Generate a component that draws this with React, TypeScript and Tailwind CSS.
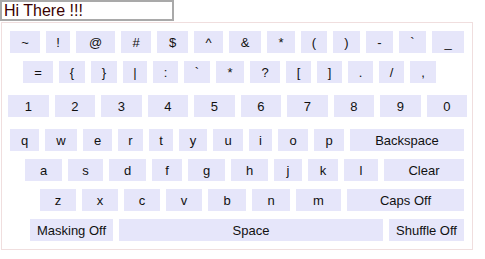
import React from "react"

type Key = { label: string; w: string }

// widths measured from the reference, gap between keys is 6px
const symbolsTop: Key[] = [
  { label: "~", w: "w-[30px]" },
  { label: "!", w: "w-[24px]" },
  { label: "@", w: "w-[39px]" },
  { label: "#", w: "w-[30px]" },
  { label: "$", w: "w-[31px]" },
  { label: "^", w: "w-[29px]" },
  { label: "&", w: "w-[32px]" },
  { label: "*", w: "w-[28px]" },
  { label: "(", w: "w-[26px]" },
  { label: ")", w: "w-[27px]" },
  { label: "-", w: "w-[27px]" },
  { label: "`", w: "w-[27px]" },
  { label: "_", w: "w-[32px]" },
]

const symbolsBottom: Key[] = [
  { label: "=", w: "w-[30px]" },
  { label: "{", w: "w-[26px]" },
  { label: "}", w: "w-[26px]" },
  { label: "|", w: "w-[24px]" },
  { label: ":", w: "w-[25px]" },
  { label: "`", w: "w-[26px]" },
  { label: "*", w: "w-[28px]" },
  { label: "?", w: "w-[30px]" },
  { label: "[", w: "w-[25px]" },
  { label: "]", w: "w-[25px]" },
  { label: ".", w: "w-[25px]" },
  { label: "/", w: "w-[25px]" },
  { label: ",", w: "w-[26px]" },
]

const numbers = ["1", "2", "3", "4", "5", "6", "7", "8", "9", "0"]

const rowQ: Key[] = [
  { label: "q", w: "w-[29px]" },
  { label: "w", w: "w-[32px]" },
  { label: "e", w: "w-[29px]" },
  { label: "r", w: "w-[25px]" },
  { label: "t", w: "w-[24px]" },
  { label: "y", w: "w-[28px]" },
  { label: "u", w: "w-[30px]" },
  { label: "i", w: "w-[23px]" },
  { label: "o", w: "w-[30px]" },
  { label: "p", w: "w-[30px]" },
  { label: "Backspace", w: "w-[114px]" },
]

const rowA: Key[] = [
  { label: "a", w: "w-[37px]" },
  { label: "s", w: "w-[35px]" },
  { label: "d", w: "w-[37px]" },
  { label: "f", w: "w-[30px]" },
  { label: "g", w: "w-[37px]" },
  { label: "h", w: "w-[37px]" },
  { label: "j", w: "w-[28px]" },
  { label: "k", w: "w-[30px]" },
  { label: "l", w: "w-[34px]" },
  { label: "Clear", w: "w-[80px]" },
]

const rowZ: Key[] = [
  { label: "z", w: "w-[36px]" },
  { label: "x", w: "w-[36px]" },
  { label: "c", w: "w-[36px]" },
  { label: "v", w: "w-[36px]" },
  { label: "b", w: "w-[38px]" },
  { label: "n", w: "w-[38px]" },
  { label: "m", w: "w-[45px]" },
  { label: "Caps Off", w: "w-[117px]" },
]

const rowBottom: Key[] = [
  { label: "Masking Off", w: "w-[83px]" },
  { label: "Space", w: "w-[264px]" },
  { label: "Shuffle Off", w: "w-[75px]" },
]

function KeyButton({ label, w }: { label: string; w: string }) {
  return (
    <div className={`${w} h-[22px] shrink-0 bg-[#e6e6fa] flex items-center justify-center text-[13px] leading-none text-[#111]`}>
      {label}
    </div>
  )
}

function Row({ keys, className }: { keys: Key[]; className: string }) {
  return (
    <div className={`flex gap-[6px] ${className}`}>
      {keys.map((k, i) => (
        <KeyButton key={i} label={k.label} w={k.w} />
      ))}
    </div>
  )
}

export default function App() {
  return (
    <div className="w-[485px] h-[259px] bg-white" style={{ fontFamily: '"Liberation Sans", Arial, sans-serif' }}>
      <div className="w-[174px] h-[21px] border-2 border-[#a9a9a9] flex items-center pl-[2px] text-[16px] leading-none text-[#3a0000] overflow-hidden whitespace-nowrap">
        Hi There !!!
      </div>

      <div className="ml-[1px] mt-[1px] w-[472px] border border-[#f0dede] pt-[8px] pb-[8px]">
        {/* symbols */}
        <Row keys={symbolsTop} className="pl-[8px]" />
        <Row keys={symbolsBottom} className="pl-[21px] mt-[8px]" />

        {/* numbers */}
        <div className="flex gap-[6px] pl-[6px] pr-[5px] mt-[12px]">
          {numbers.map((n) => (
            <div key={n} className="flex-1 h-[22px] bg-[#e6e6fa] flex items-center justify-center text-[13px] leading-none text-[#111]">
              {n}
            </div>
          ))}
        </div>

        {/* letters */}
        <Row keys={rowQ} className="pl-[8px] mt-[12px]" />
        <Row keys={rowA} className="pl-[23px] mt-[8px]" />
        <Row keys={rowZ} className="pl-[38px] mt-[8px]" />
        <Row keys={rowBottom} className="pl-[28px] mt-[8px]" />
      </div>
    </div>
  )
}
